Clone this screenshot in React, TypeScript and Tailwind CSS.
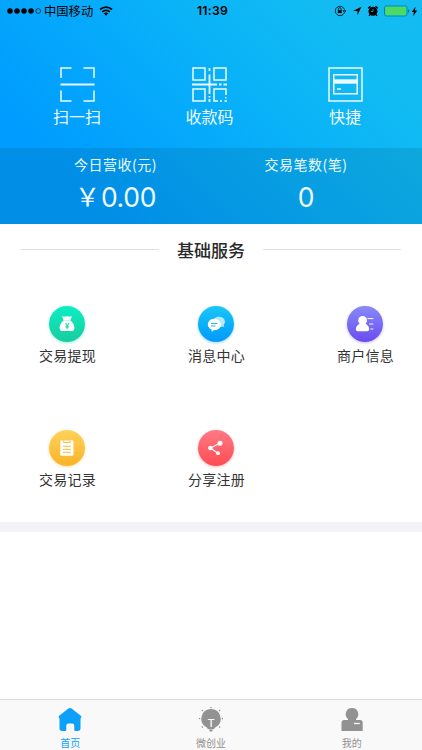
import type { ReactNode } from 'react';

function StatusBar() {
  return (
    <div className="grid h-[22px] grid-cols-[1fr_auto_1fr] items-center text-black">
      <div className="flex items-center pl-[7px]">
        <svg width="35" height="8" viewBox="0 0 35 8">
          <circle cx="3" cy="4" r="2.75" />
          <circle cx="10" cy="4" r="2.75" />
          <circle cx="17" cy="4" r="2.75" />
          <circle cx="24" cy="4" r="2.75" />
          <circle cx="31.2" cy="4" r="2.4" fill="none" stroke="#000" strokeWidth=".6" />
        </svg>
        <span className="ml-[2px] text-[12.3px] leading-[22px]">中国移动</span>
        <svg className="ml-[6px]" width="14" height="10" viewBox="0 0 14 10" fill="none" stroke="#000" strokeWidth="1.8">
          <path d="M1 3.5Q7-1.3 13 3.5M3.2 5.9Q7 2.8 10.8 5.9" />
          <path d="M4.8 7.2Q7 5.7 9.2 7.2L7 9.7Z" fill="#000" stroke="none" />
        </svg>
      </div>
      <span className="pl-[3px] font-[Inter] text-[12.2px] leading-[22px] font-semibold tracking-[.3px]">11:39</span>
      <div className="flex items-center justify-end pr-[4px]">
        <svg width="12" height="12" viewBox="0 0 12 12" fill="none" stroke="#000" strokeWidth=".8">
          <path d="M10.3 7.8A4.7 4.7 0 1 1 10.5 4.7M9 5.7h3L10.5 7.6Z" />
          <path d="M4.4 5.2V4a1.35 1.35 0 0 1 2.7 0v1.2" />
          <rect x="3.8" y="5.2" width="3.9" height="2.9" fill="#000" stroke="none" />
        </svg>
        <svg className="ml-[6px]" width="10" height="10" viewBox="0 0 10 10"><path d="M9.4.8 5.5 9.2V5H1Z" /></svg>
        <svg className="ml-[5px]" width="12" height="12" viewBox="0 0 12 12">
          <circle cx="6" cy="6.3" r="4.5" />
          <path d="M1.2 3.2 3.5 1.3M8.5 1.3l2.3 1.9M3.1 9.5 2 10.8M8.9 9.5l1.1 1.3" stroke="#000" strokeWidth="1.3" />
          <path d="M6 3.9v2.6H4" fill="none" stroke="#11b6f5" strokeWidth=".8" />
        </svg>
        <svg className="ml-[5px]" width="26" height="12" viewBox="0 0 26 12">
          <rect x=".5" y="1" width="22.5" height="10" rx="1.7" fill="none" stroke="#087b8e" strokeWidth=".8" />
          <rect x="1.3" y="1.8" width="20.9" height="8.4" rx="1" fill="#4cd964" />
          <path d="M24 4.3q1.7 1.7 0 3.4Z" />
        </svg>
        <svg className="ml-[1px]" width="7" height="11" viewBox="0 0 7 11"><path d="M4.5.8.7 5.9h2.2L2 10.2l4.3-5.6H3.9Z" /></svg>
      </div>
    </div>
  );
}

function Action({ label, children }: { label: string; children: ReactNode }) {
  return (
    <div className="flex flex-col items-center">
      <svg width="35" height="35" viewBox="0 0 35 35" fill="none" stroke="#ecfaff" strokeWidth="1.5">{children}</svg>
      <span className="mt-[3px] text-[16px] leading-[22px] text-[#f0fbff]">{label}</span>
    </div>
  );
}

function Service({ label, color, children }: { label: string; color: string; children: ReactNode }) {
  return (
    <div className="flex w-[58px] flex-col items-center">
      <div className={`mr-[2px] flex size-[36px] items-center justify-center rounded-full ${color}`}>
        <svg width="36" height="36" viewBox="0 0 36 36" fill="#fff">{children}</svg>
      </div>
      <span className="mt-[3px] mr-px mb-px text-[14px] leading-[20px] tracking-[.3px] whitespace-nowrap text-[#333]">{label}</span>
    </div>
  );
}

function Tab({ label, active = false, children }: { label: string; active?: boolean; children: ReactNode }) {
  return (
    <div className={`flex flex-1 flex-col items-center pt-[7px] ${active ? 'text-[#0ca0f8]' : 'text-[#929292]'}`}>
      <svg width="26" height="26" viewBox="0 0 26 26" fill="currentColor">{children}</svg>
      <span className="mt-[3px] text-[10px] leading-[14px]">{label}</span>
    </div>
  );
}

export default function App() {
  return (
    <div className="flex h-[750px] w-[422px] flex-col overflow-hidden bg-white font-['Noto_Sans_CJK_SC',sans-serif]">
      <header className="flex h-[224px] shrink-0 flex-col bg-[linear-gradient(45deg,#009cff_18%,#09b1f8_58%,#12bcf2_82%)]">
        <StatusBar />
        <div className="grid flex-1 grid-cols-[132px_133px_138px] pt-[45px] pl-[11px]">
          <Action label="扫一扫">
            <path d="M1 11V1H11.5M23.5 1H34V11M1 23.5V34H11.5M23.5 34H34V23.5" />
            <path d="M.5 17.5H34.5" strokeWidth="1.9" />
          </Action>
          <Action label="收款码">
            <path d="M1 1H13V13H1ZM22 1H34V13H22ZM1 22H13V34H1Z" />
            <path d="M17.5 1V4M17.5 7.5V27M0 17.5H25M27 17.5H29.5M31.5 17.5H35M17.5 29V30.5M17.5 32V35" strokeWidth="1.8" />
            <path d="M26 34H22V22H34V28M28 34H30M33.8 30V31.5M32.5 34H35" />
          </Action>
          <Action label="快捷">
            <rect x="1" y="1" width="33" height="33" />
            <rect x="5.75" y="7.75" width="23.5" height="19" />
            <path d="M5.5 14.5H29.5" strokeWidth="4.4" />
            <path d="M9 22H13" />
          </Action>
        </div>
        <div className="flex h-[76px] bg-[#0a4560]/15 pl-[20px] text-[#edfaff]">
          <div className="flex w-[191px] flex-col items-center pt-[5px]">
            <span className="text-[14px] leading-[22px] tracking-[.5px]">今日营收(元)</span>
            <span className="mt-[6px] flex items-center">
              <span className="mb-[4px] w-[26px] text-[25px] leading-[28px]">￥</span>
              <span className="font-[Inter] text-[26.5px] leading-[32px] font-normal tracking-[-.3px]">0.00</span>
            </span>
          </div>
          <div className="flex w-[190px] flex-col items-center pt-[5px]">
            <span className="text-[14px] leading-[22px] tracking-[.5px]">交易笔数(笔)</span>
            <span className="mt-[6px] font-[Inter] text-[26.5px] leading-[32px] font-normal">0</span>
          </div>
        </div>
      </header>
      <main className="flex-1">
        <div className="flex h-[51px] items-center pr-[21px] pl-[21px]">
          <div className="h-px flex-1 bg-[#dedede]" />
          <h2 className="mx-[18px] text-[17px] leading-[24px] font-medium text-[#292929]">基础服务</h2>
          <div className="h-px flex-1 bg-[#dedede]" />
        </div>
        <div className="grid grid-cols-[58px_58px_58px] gap-x-[91px] gap-y-[64px] pt-[31px] pb-[32px] pl-[39px]">
          <Service label="交易提现" color="bg-linear-to-b from-[#0ceec4] to-[#16cd9e] shadow-[0_1px_3px_#16dca766]">
            <path d="M13 10.2q2.2.8 5 0 2.8.8 5 0l-1.5 3.8h-7ZM14.7 14.2h6.6Q26 18 25.3 23q-.2 2-2.3 2H13q-2 0-2.3-2-.7-5 4-8.8Z" />
            <text x="18" y="23" fontSize="8" fontFamily="Inter" fontWeight="600" textAnchor="middle" fill="#18d8ac">¥</text>
          </Service>
          <Service label="消息中心" color="bg-linear-to-b from-[#1ac6f8] to-[#0699fa] shadow-[0_1px_3px_#0b9ff966]">
            <path d="M27 15.3a5.7 5.2 0 0 1-1.3 3.8l.5 2-2.2-.5a6 5.3 0 1 1 3-5.3Z" opacity=".7" />
            <path d="M23 18.6a6.4 5.6 0 0 1-7 5.5l-2.4 2v-2.6a6.6 5.6 0 1 1 9.4-4.9Z" />
            <path d="M13 17.5h6.5M13 20h4.5" stroke="#19a7f4" strokeWidth=".9" />
          </Service>
          <Service label="商户信息" color="bg-linear-to-b from-[#8988f8] to-[#694bee] shadow-[0_1px_3px_#785bed66]">
            <circle cx="15.6" cy="14.4" r="4.4" />
            <path d="M13 17.5h5.2q4.2 2.5 4 5.7 0 2-2 2h-9.4q-2 0-2-2 .2-3.5 4.2-5.7Z" />
            <path d="M20.5 12.6h5.8M22.3 18h4M23.5 23h2.8" stroke="#fff" strokeWidth="1" />
          </Service>
          <Service label="交易记录" color="bg-linear-to-b from-[#ffd259] to-[#fab323] shadow-[0_1px_3px_#fcbd3b66]">
            <rect x="11.3" y="10.5" width="13.2" height="15.2" rx="1.2" />
            <path d="M14.7 10.5v2h6.4v-2M14 16.3h8M14 19.3h8M14 22.3h8" fill="none" stroke="#fbbd38" strokeWidth="1" />
          </Service>
          <Service label="分享注册" color="bg-linear-to-b from-[#ff7884] to-[#ff4b52] shadow-[0_1px_3px_#ff5c6966]">
            <path d="M21.8 13.3 12.5 18l7.3 5.2" fill="none" stroke="#fff" strokeWidth="1.1" />
            <circle cx="22" cy="13.2" r="2.5" /><circle cx="12.4" cy="18" r="2.3" /><circle cx="20" cy="23.2" r="1.9" />
          </Service>
        </div>
        <div className="h-[10px] bg-[#f3f3f8]" />
      </main>
      <nav className="flex h-[51px] shrink-0 border-t border-[#d9d9d9] bg-[#f9f9f9]">
        <Tab label="首页" active>
          <path d="M11.4 1.5q1.6-1 3.2 0l9.2 7.3q1.1 1 .2 2.1l-.5.6v9.8q0 2.7-2.7 2.7h-2.5q-1 0-1-1v-4.2q0-2.3-2-2.3h-4q-2 0-2 2.3V23q0 1-1 1H5.2q-2.7 0-2.7-2.7v-9.8l-.5-.6q-.9-1.1.2-2.1Z" />
        </Tab>
        <Tab label="微创业">
          <path d="M13 2a9.7 9.7 0 0 1 5.3 17.8q-1.7.9-2.2 2.2H9.9q-.5-1.3-2.2-2.2A9.7 9.7 0 0 1 13 2ZM10.8 22.6h4.4L14 24.5h-2Z" />
          <path d="M13 0v1.2M4 3l1 1M22 3l-1 1M1 11.7h1.3M23.7 11.7H25M3.8 20.5l1-1M22.2 20.5l-1-1" stroke="currentColor" strokeWidth="1.2" />
          <text x="13" y="20" fontSize="11" fontFamily="Inter" fontWeight="500" textAnchor="middle" fill="#f9f9f9">T</text>
        </Tab>
        <Tab label="我的">
          <path d="M13 1a6.2 6.2 0 0 1 4 11v1h4q2.7 0 2.7 2.7V24H2.5v-8.3Q2.5 13 5.2 13H9v-1a6.2 6.2 0 0 1 4-11Z" />
          <path d="M15 16.5h5.8" stroke="#f9f9f9" strokeWidth="1.3" />
        </Tab>
      </nav>
    </div>
  );
}
